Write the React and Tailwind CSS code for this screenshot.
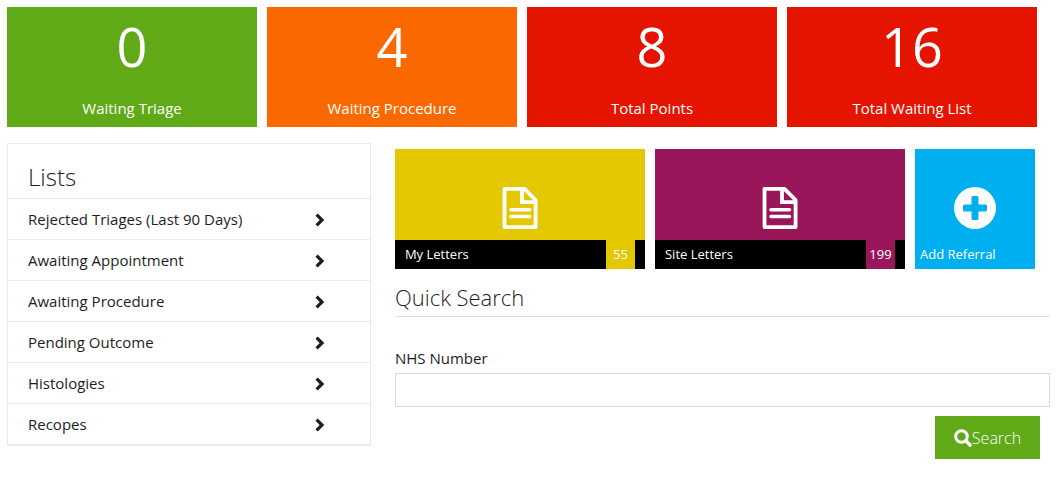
const stats = [
    { label: "Waiting Triage", value: 0, color: "bg-[#60a917]" },
    { label: "Waiting Procedure", value: 4, color: "bg-[#fa6800]" },
    { label: "Total Points", value: 8, color: "bg-[#e51400]" },
    { label: "Total Waiting List", value: 16, color: "bg-[#e51400]" },
];

const lists = [
    "Rejected Triages (Last 90 Days)",
    "Awaiting Appointment",
    "Awaiting Procedure",
    "Pending Outcome",
    "Histologies",
    "Recopes",
];

const letters = [
    { label: "My Letters", count: 55, color: "bg-[#e3c800]" },
    { label: "Site Letters", count: 199, color: "bg-[#99165a]" },
];

const ChevronIcon = () => (
    <svg className="w-[10px] h-[14px]" viewBox="0 0 10 14" fill="none" stroke="#1d1d1d" strokeWidth="3.2" aria-hidden="true">
        <path d="M1.6 1.6 7 7 1.6 12.4" />
    </svg>
);

const LetterIcon = () => (
    <svg className="w-[36px] h-[42px]" viewBox="0 0 36 42" fill="none" stroke="#fff" strokeWidth="3.8" strokeLinejoin="round" aria-hidden="true">
        <path d="M2.5 1.9H22.5L33.6 13V40.1H2.5Z" />
        <path d="M20 2V15.2H33.5" strokeLinejoin="miter" />
        <path d="M9 22.7H27.5M9 29.5H27.5" strokeWidth="3.6" strokeLinecap="round" />
    </svg>
);

const PlusIcon = () => (
    <svg className="w-[42px] h-[42px]" viewBox="0 0 42 42" aria-hidden="true">
        <circle cx="21" cy="21" r="21" fill="#fff" />
        <path
            d="M19 9h4a1.5 1.5 0 0 1 1.5 1.5v7h7a1.5 1.5 0 0 1 1.5 1.5v4a1.5 1.5 0 0 1-1.5 1.5h-7v7a1.5 1.5 0 0 1-1.5 1.5h-4a1.5 1.5 0 0 1-1.5-1.5v-7h-7a1.5 1.5 0 0 1-1.5-1.5v-4a1.5 1.5 0 0 1 1.5-1.5h7v-7A1.5 1.5 0 0 1 19 9z"
            fill="#00aff0"
        />
    </svg>
);

const SearchIcon = () => (
    <svg className="w-[18px] h-[18px]" viewBox="0 0 18 18" fill="none" stroke="#fff" aria-hidden="true">
        <circle cx="7.5" cy="7.5" r="5.8" strokeWidth="3" />
        <path d="M12 12 16 16" strokeWidth="3.6" strokeLinecap="round" />
    </svg>
);

const StatTile = ({ item }) => (
    <a href="#" className={`flex-1 h-[120px] flex flex-col items-center justify-between pb-[9px] text-white ${item.color}`}>
        <span className="text-[54px] leading-[78px]">{item.value}</span>
        <span className="text-[15px] leading-5">{item.label}</span>
    </a>
);

const LetterTile = ({ item }) => (
    <a href="#" className={`grow basis-[250px] h-[120px] flex flex-col text-white ${item.color}`}>
        <span className="flex-1 flex items-end justify-center pb-[11px]">
            <LetterIcon />
        </span>
        <span className="h-[29px] flex bg-black px-[10px] text-[13px] leading-[29px]">
            <span className="flex-1">{item.label}</span>
            <span className={`w-[29px] text-center ${item.color}`}>{item.count}</span>
        </span>
    </a>
);

const App = () => {
    return (
        <div className="min-h-screen bg-white pl-[7px] pr-2 pt-[7px] font-['Open_Sans','Noto_Sans',sans-serif] text-[#1d1d1d]">
            <div className="flex gap-[10px] pr-[13px]">
                {stats.map((item) => (
                    <StatTile item={item} key={item.label} />
                ))}
            </div>

            <div className="mt-4 grid grid-cols-[5fr_9fr] items-start gap-6">
                <nav className="border border-b-2 border-[#eaeaea]">
                    <h2 className="pl-5 pt-[13px] h-[54px] text-2xl leading-10 font-light">Lists</h2>
                    <ul>
                        {lists.map((name) => (
                            <li key={name} className="border-t border-[#eaeaea]">
                                <a href="#" className="h-10 flex items-center justify-between pl-5 pr-[45px] pt-[2px] text-[15px] leading-[18px]">
                                    <span className="pb-[2px]">{name}</span>
                                    <ChevronIcon />
                                </a>
                            </li>
                        ))}
                    </ul>
                </nav>

                <main className="pt-[6px]">
                    <div className="flex gap-[10px] pr-[15px]">
                        {letters.map((item) => (
                            <LetterTile item={item} key={item.label} />
                        ))}
                        <a href="#" className="w-[120px] h-[120px] flex flex-col bg-[#00aff0] text-white">
                            <span className="flex-1 flex items-end justify-center pb-[11px]">
                                <PlusIcon />
                            </span>
                            <span className="h-[29px] px-[5px] text-[13px] leading-[29px]">Add Referral</span>
                        </a>
                    </div>

                    <h2 className="mt-3 border-b border-[#e0e0e0] pb-[3px] text-[22px] leading-8 font-light">Quick Search</h2>

                    <form className="mt-[31px] flex flex-col" onSubmit={(e) => e.preventDefault()}>
                        <label htmlFor="nhs" className="text-[15px] leading-5">NHS Number</label>
                        <input id="nhs" type="text" className="mt-[5px] h-[34px] w-full border border-[#d9d9d9] px-2 text-[15px] outline-none" />
                        <button type="submit" className="mt-[9px] mr-[10px] self-end w-[105px] h-[43px] flex items-center justify-center bg-[#60a917] text-base font-light text-white">
                            <SearchIcon />
                            Search
                        </button>
                    </form>
                </main>
            </div>
        </div>
    );
};

export default App;
